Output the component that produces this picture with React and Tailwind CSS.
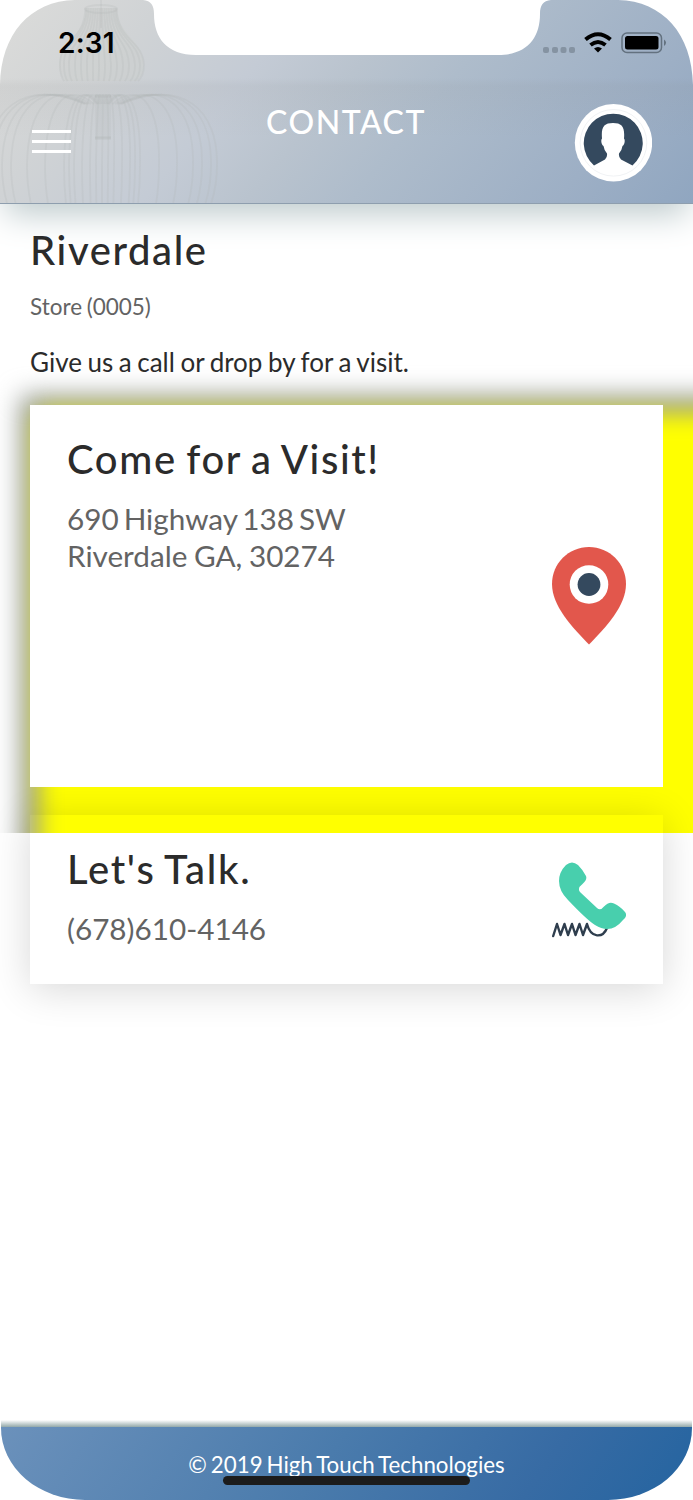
const upperRibs = [-42, -38, -33, -27, -21, -15, -9, -3, 3, 9, 15, 21, 27, 33, 38, 42];
const lowerRibs = [-115, -109, -100, -91, -75, -57, -38, -33, -28, -20, -12, -6, 0, 6, 12, 20, 28, 33, 38, 57, 75, 91, 100, 109, 115];

function Lanterns() {
  return (
    <svg className="absolute left-0 top-0" width="240" height="203" viewBox="0 0 240 203" fill="none" stroke="#b0b4b4">
      <path d="M86 8H117C117 36 145 40 144 67Q143 76 137 81H65Q60 76 59 67C59 40 86 36 86 8Z" fill="#c9cccb" fillOpacity="0.3" stroke="none" />
      <g strokeOpacity="0.22" strokeWidth="1.8">
        <path d="M101 0V28" />
        <ellipse cx="101" cy="9" rx="16" ry="4" />
        {upperRibs.map((x) => (
          <path key={x} d={`M${101 + x * 0.37} 8C${101 + x * 0.4} 42 ${101 + x} 40 ${102 + x} 65Q${102 + x} 76 ${101 + x * 0.88} 81`} />
        ))}
      </g>
      <g strokeOpacity="0.2" strokeWidth="1.8">
        {lowerRibs.map((x) => (
          <path key={x} d={`M${103 + x * 0.16} 104C${103 + x * 0.7} 78 ${103 + x} 110 ${102 + x} 165Q${102 + x} 185 ${102 + x * 0.95} 203`} />
        ))}
        <path d="M95 96H111M95 138H111" strokeWidth="3" strokeOpacity="0.4" />
      </g>
      <path d="M95 97H111V138H95Z" fill="#b8bbbb" fillOpacity="0.18" stroke="none" />
    </svg>
  );
}

function PhoneFrame() {
  return (
    <svg className="pointer-events-none absolute left-0 top-0 z-20" width="693" height="110" viewBox="0 0 693 110" fill="#fff">
      <path d="M0 0H75C30 1 1 34 0 85Z" />
      <path d="M693 0H618C663 1 692 34 693 85Z" />
      <path d="M143 0C151 1 154 5 154 14C154 38 167 55 196 55H498C527 55 540 38 540 14C540 5 543 1 551 0Z" />
    </svg>
  );
}

function StatusBar() {
  return (
    <div className="relative flex h-[84px] items-center justify-between pl-[58px] pr-[26px] pt-0.5 font-['Inter',sans-serif]">
      <span className="text-[28px] font-semibold leading-none tracking-[0.2px] text-black">2:31</span>
      <svg width="124" height="24" viewBox="0 0 124 24">
        <g fill="#8593a2">
          <rect x="0" y="16" width="6" height="6" rx="2" />
          <rect x="9" y="16" width="6" height="6" rx="2" />
          <rect x="17.5" y="16" width="6" height="6" rx="2" />
          <rect x="26" y="16" width="6" height="6" rx="2" />
        </g>
        <g fill="none" stroke="#000" strokeWidth="4">
          <path d="M42.5 8.5Q55 -2 67.5 8.5" />
          <path d="M47.5 14Q55 8 62.5 14" />
        </g>
        <path d="M51 17.5Q55 14.5 59 17.5L55 21.5Z" />
        <rect x="79" y="2" width="39.5" height="19.5" rx="5" fill="none" stroke="#63717f" strokeWidth="1.5" />
        <rect x="82" y="5" width="33.5" height="13.5" rx="2.5" />
        <path d="M121 8.5Q125 11.5 121 15Z" fill="#63717f" />
      </svg>
    </div>
  );
}

function Avatar() {
  return (
    <svg className="mt-px" width="78" height="78" viewBox="0 0 78 78">
      <circle cx="39.5" cy="38.8" r="38.7" fill="#fff" />
      <circle cx="39.5" cy="38.8" r="33.3" fill="none" stroke="#e6e9ec" strokeWidth=".6" />
      <path d="M20 61.5A29.5 29.5 0 1 1 58.5 61.5L47 55.5Q44.5 53.5 45 49.5Q48 46 48.5 42C50.5 41 51.500 36 50 34.5C51 23 48 19 39 19S27 23 28 34.5C26.5 36 27.5 41 29.5 42Q30 46 33 49.5Q33.5 53.5 31 55.5Z" fill="#34495e" />
    </svg>
  );
}

function Header() {
  return (
    <header className="relative h-[204px] shrink-0 border-b border-[#8e9eae] bg-[linear-gradient(130deg,#dcdcda_0%,#d0d3d5_19%,#c4cbd5_36%,#b9c3ce_48%,#aebccb_60%,#9dafc5_84%,#90a6c0_100%)] shadow-[0_15px_32px_-5px_#bdcacc]">
      <div className="absolute inset-x-0 bottom-0 top-[78px] bg-[linear-gradient(#80808000,#80808014_8px,#80808000_60px)]" />
      <Lanterns />
      <StatusBar />
      <div className="relative flex items-start justify-between pl-8 pr-[41px] pt-[19px]">
        <button className="mt-[27px] flex w-[39px] flex-col gap-[7px]" aria-label="Menu">
          <span className="h-[3px] w-full bg-white" />
          <span className="h-[3px] w-full bg-white" />
          <span className="h-[3px] w-full bg-white" />
        </button>
        <h1 className="ml-[47px] mt-px text-[32px] font-medium leading-9 tracking-[1.5px] text-white">CONTACT</h1>
        <Avatar />
      </div>
    </header>
  );
}

function MapPin() {
  return (
    <svg width="74" height="98" viewBox="0 0 74 98">
      <path d="M37 0C57.5 0 74 16.5 74 37C74 59 54 80 37 97.5C20 80 0 59 0 37C0 16.5 16.5 0 37 0Z" fill="#e2574c" />
      <circle cx="37" cy="37.5" r="19.3" fill="#fff" />
      <circle cx="37" cy="37.5" r="11.4" fill="#34495e" />
    </svg>
  );
}

function PhoneIcon() {
  return (
    <svg width="74" height="76" viewBox="0 0 74 76">
      <path d="M1.2 74L5 62L8.5 73L12.5 62L16 73L20 62L23.5 73L27.5 62L31 73L35 62C39 77 51 76 55 66" fill="none" stroke="#2f3e4e" strokeWidth="2.4" strokeLinecap="round" strokeLinejoin="round" />
      <path d="M14 3Q20 -2 26 3Q31 8 34 14Q35.5 18 30.5 22Q25 26 28 30L45 46Q48.5 49 52 44.5Q57 39 62 41.5Q68 44 73 50Q76 54 71 58Q59 73 43 63Q35 58 16 38Q7 29 7 19Q7 10 14 3Z" fill="#48cfad" />
    </svg>
  );
}

export default function App() {
  return (
    <div className="relative flex h-[1500px] w-[693px] flex-col overflow-hidden bg-white font-['Lato',sans-serif] text-[#2b2b2b]">
      <PhoneFrame />
      <Header />

      <main className="isolate flex-1 px-[30px] pt-[21px]">
        <h2 className="text-[40px] font-medium leading-[50px] tracking-[1.6px]">Riverdale</h2>
        <p className="mt-[18px] text-[22.5px] leading-[28px] text-[#636363] [word-spacing:-1.2px]">Store (0005)</p>
        <p className="mt-[25px] text-[26px] leading-8 [word-spacing:-1.1px]">Give us a call or drop by for a visit.</p>

        <section className="relative mt-[27px]">
          {/* Glow behind the visit card, cut off below it */}
          <div className="absolute -inset-x-[30px] -bottom-[46px] -top-[50px] -z-10 overflow-hidden">
            <div className="ml-[21px] mt-[41px] h-[600px] w-[800px] bg-[#8f948f] blur-[13px]" />
            <div className="-mt-[584px] ml-[38px] h-[700px] w-[800px] bg-[#ffff00] blur-[12px]" />
          </div>
          <div className="flex h-[382px] items-center justify-between bg-white px-[37px]">
            <div className="self-start pt-[29px]">
              <h3 className="text-[40px] font-medium leading-[50px] tracking-[1.6px] [word-spacing:-2px]">Come for a Visit!</h3>
              <p className="mt-4 text-[29.7px] leading-[37px] text-[#636363]">
                <span className="[word-spacing:-2.6px]">690 Highway 138 SW</span>
                <br />
                <span className="[word-spacing:-1px]">Riverdale GA, 30274</span>
              </p>
            </div>
            <MapPin />
          </div>
        </section>

        <section className="mt-7 flex h-[169px] items-center justify-between px-[37px] shadow-[0_5px_38px_0_rgba(0,0,0,0.16)]">
          <div className="self-start pt-[29px]">
            <h3 className="text-[40px] font-medium leading-[50px] tracking-[1.7px] [word-spacing:-2px]">Let's Talk.</h3>
            <p className="mt-4 text-[29.7px] leading-[37px] text-[#636363]">(678)610-4146</p>
          </div>
          <PhoneIcon />
        </section>
      </main>

      <div className="mx-px h-[7px] shrink-0 bg-linear-to-b from-transparent to-[#93a8a9]" />
      <footer className="relative mx-px flex h-[73px] shrink-0 justify-center rounded-b-[84px_72px] bg-[linear-gradient(125deg,#6b91bb_0%,#4a7bac_47%,#376ba4_77%,#2464a0_100%)] pt-[23px]">
        <p className="text-[22.3px] leading-[30px] text-white [word-spacing:-1.7px]">© 2019 High Touch Technologies</p>
        <div className="absolute bottom-[15px] left-[222px] h-[9px] w-[247px] rounded-full bg-[#1c1c1c]" />
      </footer>
    </div>
  );
}
